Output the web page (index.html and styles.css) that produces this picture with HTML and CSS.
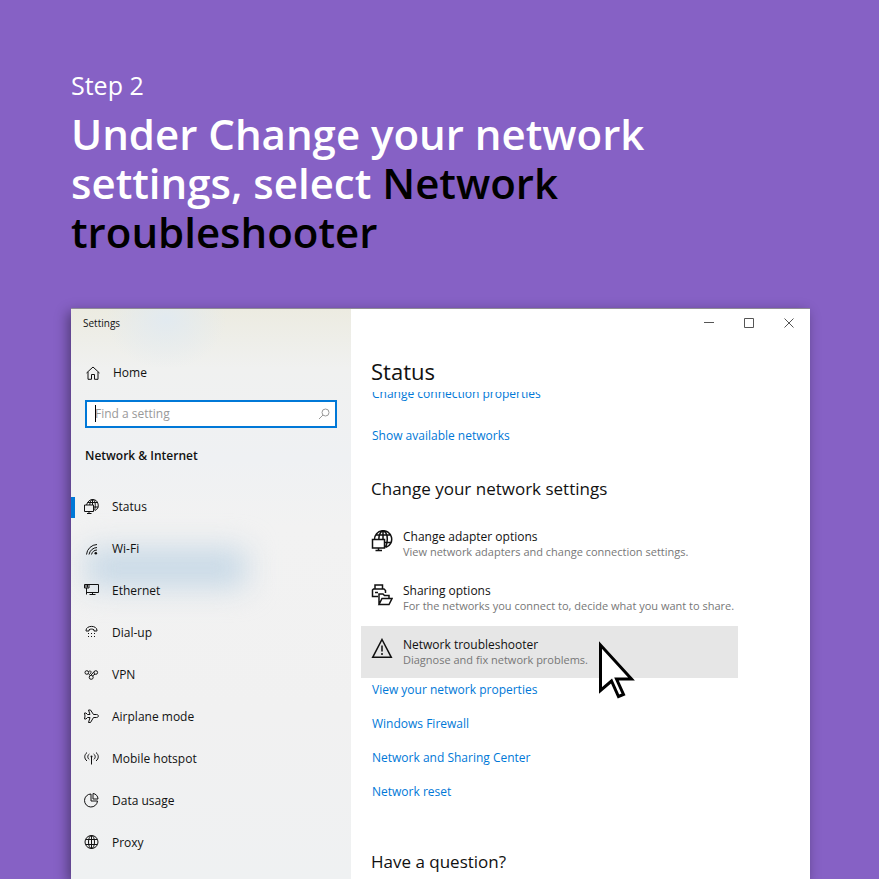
FILE: index.html
```html
<!DOCTYPE html>
<html lang="en">
<head>
    <meta charset="UTF-8">
    <meta name="viewport" content="width=device-width, initial-scale=1.0">
    <title>Network troubleshooter - Step 2</title>
    <link rel="stylesheet" href="styles.css">
</head>
<body>
    <header class="intro">
        <p class="step">Step 2</p>
        <h1>Under Change your network settings, select <strong>Network troubleshooter</strong></h1>
    </header>

    <div class="window">
        <aside class="sidebar">
            <div class="app-name">Settings</div>
            <a class="nav-item home" href="#">
                <svg viewBox="0 0 16 16"><path d="M1.500 8 8 2l6.500 6M3 7v7.300h3.500V9.500h3v4.800H13V7"/></svg>
                Home
            </a>
            <div class="search">
                <input type="text" aria-label="Find a setting" placeholder="Find a setting">
                <span class="caret"></span>
                <svg viewBox="0 0 12 12"><circle cx="7.500" cy="4.500" r="3.500"/><path d="M5 7 1 11"/></svg>
            </div>
            <h2>Network &amp; Internet</h2>
            <nav>
                <a class="nav-item active" href="#">
                    <svg viewBox="0 0 16 16"><path d="M2.500 6C3.500 3 5.500.500 8.500.500a5.800 5.800 0 0 1 2.500 11M3.500 3.500h10M9.500 8h4.800M5.800 6C5.800 3 7 .500 8.500.500s2.800 2 2.800 6-1.300 5-1.300 5M8.500.500V6M.500 6h9v6.500h-9zM5 12.500v2M3 14.500h4.500"/></svg>
                    Status
                </a>
                <a class="nav-item" href="#">
                    <svg viewBox="0 0 16 16"><path d="M2.500 13.500a11 11 0 0 1 10.500-10M5 13.500a8.500 8.500 0 0 1 8-7M7.500 13.500a6 6 0 0 1 5.500-4.500"/><circle class="fill" cx="11.800" cy="12.300" r="1.300"/></svg>
                    Wi-Fi
                </a>
                <a class="nav-item" href="#">
                    <svg viewBox="0 0 16 16"><path d="M5 1.500h9.500v8H3M.500 1.500h4.500v3.500H.500zM2 1.500v3M3.500 1.500v3M2.500 5v6.500M8.500 9.500v2M5.500 11.500h6"/></svg>
                    Ethernet
                </a>
                <a class="nav-item" href="#">
                    <svg viewBox="0 0 16 16"><path d="M2 5.500c0-5.500 11-5.500 11 0v.5h-3V4.800c-1.500-1-3.500-1-5 0V6H2z"/><path class="dots" d="M4 8.500h7M4 11.500h7"/></svg>
                    Dial-up
                </a>
                <a class="nav-item" href="#">
                    <svg viewBox="0 0 16 16"><circle cx="2.800" cy="5.500" r="1.800"/><circle cx="11.800" cy="5.500" r="1.800"/><circle cx="7.200" cy="10.300" r="2"/><path d="M4.500 4.500C7 3 8 5 6 7M4.500 6.500 6 8.500M6.800 8.300 10.200 4.500M8.700 8.800 11 7.200"/></svg>
                    VPN
                </a>
                <a class="nav-item" href="#">
                    <svg viewBox="0 0 16 16"><path d="M.500 4H2l1.500 1.500H6L4.500 1h2l3 4.500h3c2.500 0 2.500 3 0 3h-3l-3 5h-2l1.500-5H3.500L2 10H.500L1 7z"/></svg>
                    Airplane mode
                </a>
                <a class="nav-item" href="#">
                    <svg viewBox="0 0 16 16"><path d="M7.500 6v7.500M3 1.500c-3 2.500-3 6 0 8.500M12 1.500c3 2.500 3 6 0 8.500M5.300 3c-2 1.500-2 4 0 5.500M9.700 3c2 1.500 2 4 0 5.500"/><circle class="fill" cx="7.500" cy="5.500" r="1"/></svg>
                    Mobile hotspot
                </a>
                <a class="nav-item" href="#">
                    <svg viewBox="0 0 16 16"><path d="M7 1a6.500 6.500 0 1 0 6.500 7H7zM9 .500V6h5A5.500 5.500 0 0 0 9 .500z"/></svg>
                    Data usage
                </a>
                <a class="nav-item" href="#">
                    <svg viewBox="0 0 16 16"><circle cx="7.500" cy="7" r="6.500"/><ellipse cx="7.500" cy="7" rx="3" ry="6.500"/><path d="M7.500.500v13M1.700 4.500h11.600M1.700 9.500h11.600"/></svg>
                    Proxy
                </a>
            </nav>
        </aside>

        <main class="content">
            <div class="controls">
                <button aria-label="Minimize"><svg viewBox="0 0 10 10"><path d="M0 4.500h10"/></svg></button>
                <button aria-label="Maximize"><svg viewBox="0 0 10 10"><path d="M.5.500h9v9h-9z"/></svg></button>
                <button aria-label="Close"><svg viewBox="0 0 10 10"><path d="m.5.500 9 9m0-9-9 9"/></svg></button>
            </div>
            <h2 class="page-title">Status</h2>
            <div class="scroll">
                <div class="links top-links">
                    <a href="#">Change connection properties</a>
                    <a href="#">Show available networks</a>
                </div>
                <h3>Change your network settings</h3>
                <div class="options">
                    <button class="option">
                        <svg viewBox="0 0 22 22"><path d="M3.500 9.500A8.600 8.600 0 1 1 15 17.400M4.500 5h15M14 12.500h6.300M7.800 9.500c0-5 2-8.500 4.200-8.500s4.300 3 4.300 8-1 6-1.800 8.400M12 1v8.500M1.500 9.500h12v8.500H1.500zM7.500 18v2.500M4.500 20.500h6.500"/></svg>
                        <span class="option-text"><span>Change adapter options</span><small>View network adapters and change connection settings.</small></span>
                    </button>
                    <button class="option">
                        <svg viewBox="0 0 22 22"><path d="M4 5V1h7.500v4M7 12.500H1.500V6l1-1H13l1.500 1.500V9M4 8.500h3M8 20.500V10h4l1.500 1.500H18v3M8 20.500l3-6h10l-3 6z"/></svg>
                        <span class="option-text"><span>Sharing options</span><small>For the networks you connect to, decide what you want to share.</small></span>
                    </button>
                    <button class="option selected">
                        <svg viewBox="0 0 22 22"><path d="M11 1.500 20.300 19.300H1.700zM11 7.500v6M11 15v2"/></svg>
                        <span class="option-text"><span>Network troubleshooter</span><small>Diagnose and fix network problems.</small></span>
                        <svg class="cursor" viewBox="0 0 38 58"><path d="M2.500 4v45.500l11-9.500 7 15.500 5-2L18.500 38H33.500z"/></svg>
                    </button>
                </div>
                <div class="links">
                    <a href="#">View your network properties</a>
                    <a href="#">Windows Firewall</a>
                    <a href="#">Network and Sharing Center</a>
                    <a href="#">Network reset</a>
                </div>
                <h3 class="question">Have a question?</h3>
            </div>
        </main>
    </div>
</body>
</html>
```
FILE: styles.css
```css
* {
    box-sizing: border-box;
}

body {
    margin: 0;
    min-height: 100vh;
    padding: 69px 69px 0 71px;
    display: flex;
    flex-direction: column;
    background-color: #8661c5;
    color: #111;
    font-family: "Open Sans", "Noto Sans", sans-serif;
    font-size: 12px;
    line-height: 16px;
}

h1, h2, h3, p {
    margin: 0;
}

a {
    text-decoration: none;
}

button {
    border: 0;
    background: none;
    color: inherit;
    font: inherit;
}

svg {
    flex: none;
    fill: none;
    stroke: #111;
    stroke-width: 1;
}

.fill {
    fill: #111;
    stroke: none;
}

.dots {
    stroke-dasharray: 1 2;
}

/* heading */
.intro {
    height: 239px;
    color: white;
}

.step {
    font-size: 25px;
    line-height: 32px;
}

h1 {
    max-width: 620px;
    margin-top: 8px;
    font-size: 42px;
    font-weight: 600;
    line-height: 49px;
}

h1 strong {
    color: black;
    font-weight: 600;
}

/* settings window */
.window {
    flex: 1;
    display: flex;
    border-top: 1px solid #8f8c96;
    background-color: white;
    box-shadow: -3px 4px 12px rgba(0, 0, 0, 0.4);
}

.sidebar {
    position: relative;
    z-index: 0;
    width: 280px;
    flex: none;
    overflow: hidden;
    background:
        radial-gradient(ellipse 60px 50px at 95px 10px, #e2eaf0, rgba(226, 234, 240, 0)),
        linear-gradient(#ecebe1, #f0f1f0 60px, #eff1f3 150px, #f2f2f2 220px, #f1f1f1 400px, #eff1f2);
}

/* wallpaper showing through the sidebar */
.sidebar::before {
    content: "";
    position: absolute;
    z-index: -1;
    left: 15px;
    top: 240px;
    width: 160px;
    height: 38px;
    background-color: #c6d8e6;
    filter: blur(15px);
}

.app-name {
    padding: 6px 12px;
    height: 43px;
    font-size: 10px;
}

.nav-item {
    display: flex;
    align-items: center;
    gap: 12px;
    height: 42px;
    padding-left: 13px;
    color: #111;
}

.nav-item svg {
    width: 16px;
    height: 16px;
}

.home {
    padding-left: 14px;
}

.search {
    position: relative;
    margin: 6px 14px 13px;
}

.search input {
    display: block;
    width: 100%;
    height: 28px;
    padding: 0 8px 1px;
    border: 2px solid #0078d7;
    border-radius: 0;
    outline: none;
    font: inherit;
}

.search input::placeholder {
    color: #999;
}

.search .caret {
    position: absolute;
    left: 10px;
    top: 5px;
    width: 1px;
    height: 17px;
    background-color: black;
}

.search svg {
    position: absolute;
    right: 7px;
    top: 8px;
    width: 12px;
    height: 12px;
    stroke: #999;
}

.sidebar h2 {
    padding-left: 14px;
    font-size: 12px;
    font-weight: 600;
    line-height: 30px;
}

nav {
    padding: 15px 0;
}

.active {
    background: linear-gradient(#0078d7, #0078d7) left center / 4px 21px no-repeat;
}

.content {
    flex: 1;
    min-width: 0;
}

.controls {
    display: flex;
    justify-content: flex-end;
    height: 28px;
    padding-right: 1px;
}

.controls button {
    display: flex;
    align-items: center;
    justify-content: center;
    width: 40px;
    padding: 0;
}

.controls svg {
    width: 10px;
    height: 10px;
    stroke: #555;
}

.page-title {
    padding: 18px 20px 0;
    font-size: 22px;
    font-weight: 400;
    line-height: 32px;
}

.scroll {
    margin-top: 5px;
    padding: 0 10px;
    overflow: hidden;
}

.links {
    display: flex;
    flex-direction: column;
    align-items: flex-start;
    gap: 18px;
    margin-top: 4px;
    padding-left: 11px;
}

.links a {
    color: #0078d7;
}

.top-links {
    gap: 26px;
    margin-top: -6px;
}

h3 {
    margin: 33px 0 17px;
    padding-left: 10px;
    font-size: 17px;
    font-weight: 400;
    line-height: 24px;
}

.options {
    display: flex;
    flex-direction: column;
    gap: 2px;
    max-width: 377px;
}

.option {
    position: relative;
    display: flex;
    gap: 10px;
    height: 52px;
    padding: 11px 10px;
    text-align: left;
}

.option svg {
    width: 22px;
    height: 22px;
    margin-top: 1px;
    stroke-width: 1.5;
}

.option-text {
    display: flex;
    flex-direction: column;
    white-space: nowrap;
}

.option-text small {
    color: #777;
    font-size: 11px;
    line-height: 14px;
}

.selected {
    background-color: #e6e6e6;
}

.option .cursor {
    position: absolute;
    left: 237px;
    top: 14px;
    width: 38px;
    height: 58px;
    fill: white;
    stroke: black;
    stroke-width: 3;
}

.question {
    margin: 50px 0 0;
}
```
